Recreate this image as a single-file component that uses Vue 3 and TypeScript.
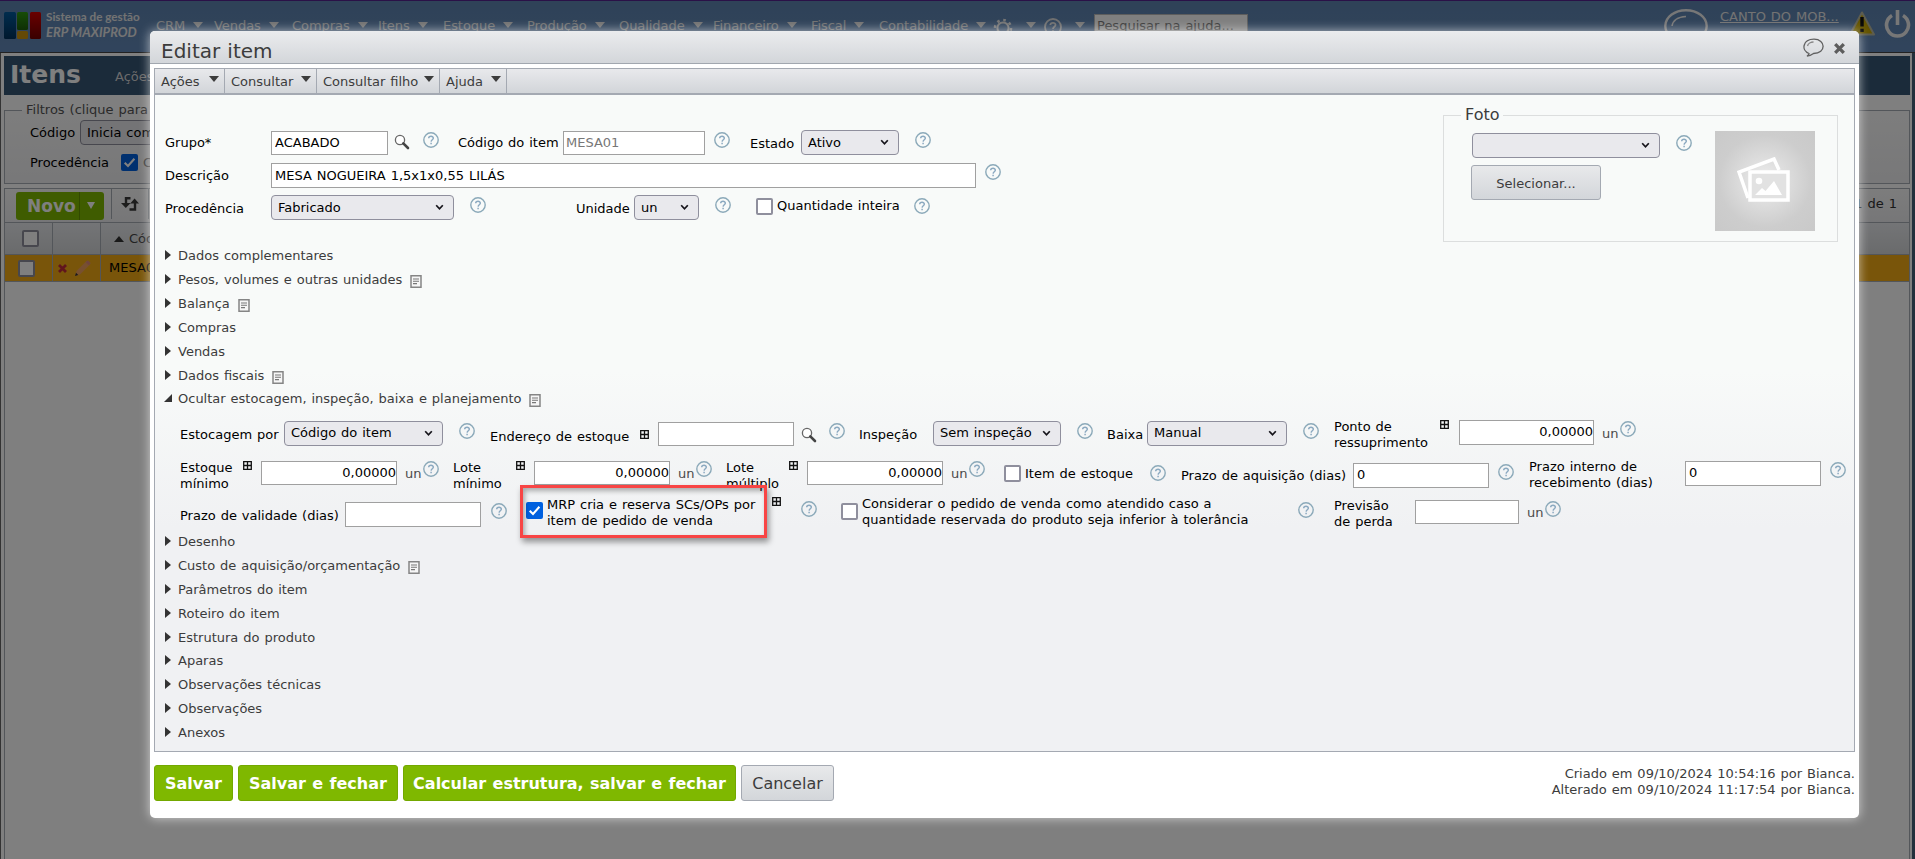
<script setup lang="ts">
import { h, type FunctionalComponent } from 'vue'

const menus: string[] = ['CRM', 'Vendas', 'Compras', 'Itens', 'Estoque', 'Produção', 'Qualidade', 'Financeiro', 'Fiscal', 'Contabilidade']
const dialogMenus: string[] = ['Ações', 'Consultar', 'Consultar filho', 'Ajuda']

interface Section { title: string; note?: boolean; open?: boolean }
const upper: Section[] = [
  { title: 'Dados complementares' },
  { title: 'Pesos, volumes e outras unidades', note: true },
  { title: 'Balança', note: true },
  { title: 'Compras' },
  { title: 'Vendas' },
  { title: 'Dados fiscais', note: true },
  { title: 'Ocultar estocagem, inspeção, baixa e planejamento', note: true, open: true },
]
const lower: Section[] = [
  { title: 'Desenho' },
  { title: 'Custo de aquisição/orçamentação', note: true },
  { title: 'Parâmetros do item' },
  { title: 'Roteiro do item' },
  { title: 'Estrutura do produto' },
  { title: 'Aparas' },
  { title: 'Observações técnicas' },
  { title: 'Observações' },
  { title: 'Anexos' },
]

const Help: FunctionalComponent = () =>
  h('svg', { width: 16, height: 16, viewBox: '0 0 16 16', fill: 'none' }, [
    h('circle', { cx: 8, cy: 8, r: 7.2, stroke: '#8ba9b9', 'stroke-width': 1.4 }),
    h('path', { d: 'M5.7 6.3C5.8 3.6 10.5 3.7 10.3 6.2C10.2 7.8 8.2 7.7 8.1 9.6M8.1 10.8V12.2', stroke: '#8ba9c0', 'stroke-width': 1.5 }),
  ])
const Lens: FunctionalComponent = () =>
  h('svg', { width: 16, height: 16, viewBox: '0 0 16 16', fill: 'none' }, [
    h('circle', { cx: 6, cy: 6, r: 4.6, stroke: '#666', 'stroke-width': 1.3, fill: '#fff' }),
    h('path', { d: 'M9.3 9.3L14 14', stroke: '#444', 'stroke-width': 2.6, 'stroke-linecap': 'round' }),
  ])
const Plus: FunctionalComponent = () =>
  h('svg', { width: 9, height: 9, viewBox: '0 0 9 9', fill: 'none' }, [
    h('path', { d: 'M.7 .7H8.3V8.3H.7ZM4.5 .5V8.5M.5 4.5H8.5', stroke: '#111', 'stroke-width': 1.3 }),
  ])
const Chev: FunctionalComponent = () =>
  h('svg', { width: 9, height: 7, viewBox: '0 0 9 7', fill: 'none' }, [
    h('path', { d: 'M1.2 1.2L4.5 4.8L7.8 1.2', stroke: '#15141a', 'stroke-width': 1.7 }),
  ])
const Check: FunctionalComponent = () =>
  h('svg', { width: 17, height: 17, viewBox: '0 0 17 17', fill: 'none' }, [
    h('rect', { width: 17, height: 17, rx: 2, fill: '#0060df' }),
    h('path', { d: 'M3.7 8.8L7 12L13.4 4.8', stroke: '#fff', 'stroke-width': 2.1 }),
  ])
const Note: FunctionalComponent = () =>
  h('svg', { width: 12, height: 13, viewBox: '0 0 12 13', fill: 'none' }, [
    h('path', { d: 'M1 .8H11V12.2H1Z', stroke: '#858585', 'stroke-width': 1.5, fill: '#f6f6f6' }),
    h('path', { d: 'M3 4H9M3 6.3H9M3 8.6H7', stroke: '#777', 'stroke-width': 1.1 }),
  ])
</script>

<template>
  <div class="screen">
    <header class="topbar">
      <svg class="logo" width="37" height="28" viewBox="0 0 37 28">
        <defs>
          <linearGradient id="lb" x2="0" y2="1"><stop stop-color="#005a9c" /><stop offset="1" stop-color="#00315c" /></linearGradient>
          <linearGradient id="lg" x2="0" y2="1"><stop stop-color="#2f9a10" /><stop offset="1" stop-color="#1e5f0a" /></linearGradient>
          <linearGradient id="lr" x2="0" y2="1"><stop stop-color="#d40000" /><stop offset="1" stop-color="#720000" /></linearGradient>
        </defs>
        <rect x="0" y="0" width="12" height="27" rx="1.5" fill="url(#lb)" />
        <rect x="13" y="0" width="11" height="18" rx="1.5" fill="url(#lg)" />
        <rect x="13" y="19" width="11" height="8" rx="1.5" fill="#c9930c" />
        <rect x="26" y="0" width="11" height="27" rx="1.5" fill="url(#lr)" />
      </svg>
      <div class="brand"><span>Sistema de gestão</span><em>ERP MAXIPROD</em></div>
      <nav class="mainnav">
        <span v-for="m in menus" :key="m"><b>{{ m }}</b><i class="tri"></i></span>
        <span><svg width="20" height="20" viewBox="0 0 20 20" fill="none" stroke="#e8e8e8"><circle cx="10" cy="10" r="5.6" stroke-width="2" /><circle cx="10" cy="10" r="8" stroke-width="2.6" stroke-dasharray="2.6 3.68" /></svg><i class="tri"></i></span>
        <span><svg width="18" height="18" viewBox="0 0 18 18" fill="none" stroke="#dedede" stroke-width="1.8"><circle cx="9" cy="9" r="8" /><path d="M6.3 7C6.5 4 11.7 4.2 11.5 7C11.4 8.8 9 8.8 9 11M9 12.3V14" /></svg><i class="tri"></i></span>
      </nav>
      <div class="search">Pesquisar na ajuda...</div>
      <svg class="bubble" width="44" height="36" viewBox="0 0 44 36" fill="none" stroke="#eee"><ellipse cx="22" cy="17" rx="20.7" ry="15.8" stroke-width="2.4" /><path d="M8 17C9 11 14 8 22 7.5" stroke-width="1.5" /></svg>
      <a class="account">CANTO DO MOB...</a>
      <svg class="warn" width="27" height="25" viewBox="0 0 27 25"><path d="M13 1.5L25 23.5H1Z" fill="#c8a800" stroke="#b9b9a0" stroke-width="2" stroke-linejoin="round" /><path d="M13 6V15.5M13 17.8V21" stroke="#111" stroke-width="3.4" /></svg>
      <svg class="power" width="27" height="29" viewBox="0 0 27 29" fill="none" stroke="#eee" stroke-width="3.6"><path d="M8 5.5A11 11 0 1 0 19 5.5M13.5 0V15" /></svg>
    </header>

    <main class="page">
      <div class="titlebar"><h1>Itens</h1><span>Ações</span></div>
      <fieldset class="filters">
        <legend>Filtros (clique para exibir)</legend>
        <div class="frow"><span>Código</span><span class="fsel">Inicia com</span></div>
        <div class="frow two"><span>Procedência</span><Check /><small>Comprado</small></div>
      </fieldset>
      <section class="list">
        <div class="tools">
          <div class="novo"><b>Novo</b><i></i></div>
          <div class="refresh">
            <svg width="18" height="16" viewBox="0 0 18 16" fill="none" stroke="#3a3a3a" stroke-width="2.4"><path d="M9.500 2.200H5V9M8.500 13.500H14V6" /><path d="M0 7H9.600L4.800 12ZM9.200 7.500H18L13.600 2.500Z" fill="#3a3a3a" stroke="none" /></svg>
          </div>
          <span class="count">1 - 1 de 1</span>
        </div>
        <div class="line head"><span class="c1"><i class="cb"></i></span><span class="c2"></span><span class="c3"><i class="up"></i>Código</span></div>
        <div class="line rec">
          <span class="c1"><i class="cb"></i></span>
          <span class="c2">
            <svg width="9" height="9" viewBox="0 0 9 9"><path d="M1 1L8 8M8 1L1 8" stroke="#c02a3a" stroke-width="2.8" /></svg>
            <svg width="17" height="17" viewBox="0 0 17 17"><path d="M1 16L2.500 11L12 1.500L14 .5L16.500 3L15.500 5L6 14.500Z" fill="#f0a060" /><path d="M1 16L2 12.800L4.300 15Z" fill="#333" /><path d="M11.500 2L14 .5L16.500 3L15 5.500Z" fill="#e08a7c" /></svg>
          </span>
          <span class="c3">MESA01</span>
        </div>
      </section>
    </main>

    <div class="overlay"></div>

    <div class="dialog">
      <div class="dhead">
        <h2>Editar item</h2>
        <svg class="talk" width="22" height="20" viewBox="0 0 22 20" fill="none" stroke="#606060" stroke-width="1.3"><path d="M6 15.500C-2 12.500-.5 1.200 11 1.200C23 1.200 23.500 15.300 10.500 15.500C8.500 17 6 18 4 18C5.500 17.200 6 16.500 6 15.500Z" /><path d="M4.500 8C5 5.500 8 4 10.500 4" stroke="#888" /></svg>
        <svg class="close" width="11" height="11" viewBox="0 0 11 11"><path d="M1.200 1.200L9.800 9.800M9.800 1.200L1.200 9.800" stroke="#5d5d5d" stroke-width="3.300" /></svg>
      </div>

      <div class="panel">
        <nav class="dmenu"><span v-for="m in dialogMenus" :key="m"><b>{{ m }}</b><i class="tri"></i></span></nav>

        <div class="form">
          <div class="intro">
            <div class="fields">
              <div class="row r1">
                <label class="t5">Grupo*</label><input class="w117 t1" value="ACABADO" />
                <Lens class="t4" /><Help class="t2" />
                <label class="t5">Código do item</label><input class="w142 t1 dim" value="MESA01" />
                <Help class="t2" /><label class="t6">Estado</label>
                <div class="sel w98">Ativo<Chev /></div><Help class="t2" />
              </div>
              <div class="row r2">
                <label class="t5">Descrição</label><input class="w705" value="MESA NOGUEIRA 1,5x1x0,55 LILÁS" /><Help class="t1" />
              </div>
              <div class="row r3">
                <label class="t6">Procedência</label><div class="sel w183">Fabricado<Chev /></div><Help class="t2" />
                <label class="t6">Unidade</label><div class="sel w65">un<Chev /></div><Help class="t2" />
                <i class="cb t3"></i><label class="t3">Quantidade inteira</label><Help class="t3" />
              </div>
            </div>
            <fieldset class="photo">
              <legend>Foto</legend>
              <div class="pick">
                <div class="pickline"><div class="sel w188"><Chev /></div><Help class="t2" /></div>
                <div class="btn grey choose">Selecionar...</div>
              </div>
              <div class="thumb">
                <svg width="54" height="46" viewBox="0 0 54 46" fill="none" stroke="#fff"><path d="M11 41L2 15L37 2L42 13" stroke-width="3.500" /><rect x="13" y="15" width="38" height="28" stroke-width="3.500" fill="#e2e2e2" /><circle cx="22" cy="24" r="3.300" fill="#fff" stroke="none" /><path d="M18 38L25 31L28.500 34L37 24L45 38Z" fill="#fff" stroke="none" /></svg>
              </div>
            </fieldset>
          </div>

          <ul class="tree">
            <li v-for="s in upper" :key="s.title"><i :class="s.open ? 'opened' : 'closed'"></i><span>{{ s.title }}</span><Note v-if="s.note" /></li>
          </ul>

          <div class="stock">
            <div class="row ra">
              <label class="t7">Estocagem por</label><div class="sel w159 t1">Código do item<Chev /></div><Help class="t3" />
              <label class="t9">Endereço de estoque</label><Plus class="t10" /><input class="w136 t2 low" /><Lens class="t7" /><Help class="t3" />
              <label class="t7">Inspeção</label><div class="sel w128 t1">Sem inspeção<Chev /></div><Help class="t3" />
              <label class="t7">Baixa</label><div class="sel w140 t1">Manual<Chev /></div><Help class="t3" />
              <label class="tm">Ponto de<br />ressuprimento</label><Plus /><input class="w135 num" value="0,00000" />
              <label class="unit t6">un</label><Help class="t1" />
            </div>
            <div class="row rb">
              <label class="tm">Estoque<br />mínimo</label><Plus /><input class="w136 low num" value="0,00000" /><label class="unit t5">un</label><Help />
              <label class="tm">Lote<br />mínimo</label><Plus /><input class="w136 low num" value="0,00000" /><label class="unit t5">un</label><Help />
              <label class="tm">Lote<br />múltiplo</label><Plus /><input class="w136 low num" value="0,00000" /><label class="unit t5">un</label><Help />
              <i class="cb t4"></i><label class="t5">Item de estoque</label><Help class="t4" />
              <label class="t7">Prazo de aquisição (dias)</label><input class="w136 t2" value="0" /><Help class="t3" />
              <label class="tm2">Prazo interno de<br />recebimento (dias)</label><input class="w136" value="0" /><Help class="t1" />
            </div>
            <div class="row rc">
              <label class="t8">Prazo de validade (dias)</label><input class="w136 t2" /><Help class="t3" />
              <Check class="t2" /><label class="tm3">MRP cria e reserva SCs/OPs por<br />item de pedido de venda</label><Plus class="tm3" /><Help class="t1" />
              <i class="cb t3"></i><label class="tm4">Considerar o pedido de venda como atendido caso a<br />quantidade reservada do produto seja inferior à tolerância</label><Help class="t2" />
              <label class="tm2">Previsão<br />de perda</label><input class="w104 low" /><label class="unit t5">un</label><Help class="t1" />
              <div class="mark"></div>
            </div>
          </div>

          <ul class="tree">
            <li v-for="s in lower" :key="s.title"><i class="closed"></i><span>{{ s.title }}</span><Note v-if="s.note" /></li>
          </ul>
        </div>
      </div>

      <footer class="dfoot">
        <div class="btn green b1">Salvar</div>
        <div class="btn green b2">Salvar e fechar</div>
        <div class="btn green b3">Calcular estrutura, salvar e fechar</div>
        <div class="btn grey b4">Cancelar</div>
        <p>Criado em 09/10/2024 10:54:16 por Bianca.<br />Alterado em 09/10/2024 11:17:54 por Bianca.</p>
      </footer>
    </div>
  </div>
</template>

<style>
html, body { margin: 0; overflow: hidden; }
</style>

<style scoped>
* { box-sizing: border-box; }
.screen { position: relative; width: 1915px; height: 859px; overflow: hidden; background: #fff; font: 13px/16px Verdana, "DejaVu Sans", sans-serif; word-spacing: .8px; color: #000; display: flex; flex-direction: column; }
svg { display: block; flex: none; }
b { font-weight: 400; }

.topbar { height: 53px; flex: none; display: flex; align-items: flex-start; padding: 0 0 0 4px; border-top: 1px solid #54238e; background: linear-gradient(#5e84b0, #6389b9); color: #fff; border-bottom: 1px solid #444; }
.logo { margin-top: 11px; }
.brand { width: 116px; margin: 7px 0 0 5px; font: 700 11.7px/16px Lato, sans-serif; word-spacing: 0; display: flex; flex-direction: column; color: #e6e6e6; white-space: nowrap; }
.brand em { font-size: 13px; }
.mainnav { display: grid; grid-template-columns: 58px 78px 86px 65px 84px 92px 94px 98px 68px 114px 51px 49px; height: 40px; padding-top: 17px; margin-left: -6px; color: #e2e2e2; }
.mainnav span { display: flex; align-items: flex-start; letter-spacing: -.06px; }
.mainnav svg { margin-top: 0; }
.tri { border: 5px solid transparent; border-top: 6px solid currentColor; border-bottom: 0; margin: 4px 0 0 8px; }
.mainnav svg + .tri { margin-left: 13px; }
.search { width: 154px; height: 24px; margin: 13px 0 0 1px; padding: 3px 2px; background: #fff; color: #777; border: 1px solid #bbb; white-space: nowrap; }
.bubble { margin: 8px 12px 0 auto; }
.account { margin-top: 8px; width: 129px; text-decoration: underline; color: #e6e6e6; white-space: nowrap; }
.warn { margin-top: 10px; }
.power { margin: 9px 4px 0 8px; }

.page { flex: 1; border-left: 1px solid #666; border-right: 3px solid #476178; padding: 3px 2px 0 3px; background: #fff; }
.titlebar { height: 39px; background: #365675; color: #fff; display: flex; align-items: center; }
.titlebar h1 { margin: 0 0 2px 6px; width: 105px; font-size: 25px; line-height: 30px; }
.titlebar span { color: #d5d5d5; margin-top: 2px; }
.filters { margin: 7px 0 0; padding: 0 0 0 25px; border: 1px solid #a6acb5; height: 82px; background: linear-gradient(#fbfbfb, #f0f0f2); min-width: 0; }
.filters legend { color: #555; margin-left: -8px; padding: 0 4px; height: 16px; }
.frow { display: flex; align-items: center; height: 25px; margin-top: 2px; }
.frow > span:first-child { width: 50px; }
.frow.two { margin-top: 5px; }
.frow.two > span:first-child { width: 91px; }
.frow small { font-size: 13px; color: #777; margin-left: 5px; }
.fsel { height: 25px; width: 120px; border: 1px solid #8f8f9d; border-radius: 4px; background: #e9e9ed; padding: 4px 6px; }
.list { margin-top: 4px; border: 1px solid #a6acb5; border-bottom: 0; height: 680px; }
.tools { height: 33px; display: flex; align-items: center; background: linear-gradient(#fafafa, #ededf0); }
.novo { margin-left: 11px; width: 88px; height: 28px; background: #7fb800; border-radius: 3px; display: flex; align-items: center; color: #fff; }
.novo b { width: 64px; height: 28px; line-height: 29px; padding-left: 11px; font-weight: 700; font-size: 17px; border-right: 1px solid #659300; }
.novo i { border: 4px solid transparent; border-top: 7px solid #fff; border-bottom: 0; margin-left: 7px; }
.refresh { height: 30px; margin: -3px 0 0 7px; width: 38px; border: solid #a6acb5; border-width: 0 1px; display: flex; align-items: center; justify-content: center; }
.count { margin: -3px 12px 0 auto; color: #333; }
.line { display: flex; height: 32px; border-top: 1px solid #a6acb5; }
.line.head { background: linear-gradient(#e8eaee, #d4d6d8); color: #444; }
.line.rec { height: 28px; background: #f2ab14; border-bottom: 1px solid #a6acb5; }
.line span { display: flex; align-items: center; border-right: 1px solid #a6acb5; }
.line .c1 { width: 48px; padding-left: 17px; }
.rec .c1 { padding-left: 13px !important; }
.line .c2 { width: 48px; padding-left: 5px; gap: 7px; }
.line .c3 { border: 0; padding-left: 8px; }
.head .c3 { padding-left: 13px; }
.up { border: 5px solid transparent; border-bottom: 6px solid #333; border-top: 0; margin-right: 5px; }
.cb { display: block; width: 17px; height: 17px; flex: none; background: #fff; border: 2px solid #8f8f9d; border-radius: 2px; }

.overlay { position: absolute; inset: 0; background: rgba(0, 0, 0, .5); }

.dialog { position: absolute; left: 150px; top: 31px; width: 1709px; height: 787px; border-radius: 5px; background: #fff; box-shadow: 0 0 11px rgba(255, 255, 255, .65); color: #000; display: flex; flex-direction: column; }
.dhead { height: 33px; flex: none; border-bottom: 1px solid #a1a7af; border-radius: 5px 5px 0 0; background: linear-gradient(#ebecee, #d3d6da); display: flex; align-items: center; }
.dhead h2 { margin: 8px auto 0 11px; font-weight: 400; font-size: 20px; line-height: 24px; color: #3c3c3c; }
.talk { margin: 2px 9px 0 0; }
.close { margin: 3px 14px 0 0; }
.panel { margin: 4px 4px 0; height: 684px; flex: none; border: 1px solid #a4a9b2; display: flex; flex-direction: column; }
.dmenu { height: 26px; flex: none; display: grid; grid-template-columns: 70px 92px 123px 67px; background: linear-gradient(#e8e9ec, #d2d5d9); border-bottom: 2px solid #a4a9b2; color: #3c3c3c; }
.dmenu span { border-right: 1px solid #a4a9b2; display: flex; padding: 5px 6px 0 6px; white-space: nowrap; justify-content: space-between; }
.dmenu .tri { margin: 2px -1px 0 0; }
.form { flex: 1; background: linear-gradient(#f8faf9 0, #f8faf9 42%, #f0f1f3 66%, #f0f1f3); }

.intro { height: 149px; display: flex; }
.fields { width: 1288px; padding: 35px 0 0 10px; }
.row { display: grid; align-items: start; justify-content: start; }
.row > * { justify-self: start; }
.r1 { height: 33px; grid-template-columns: 106px 123px 29px 35px 105px 151px 36px 51px 114px 16px; }
.r2 { height: 32px; grid-template-columns: 106px 714px 16px; }
.r3 { grid-template-columns: 106px 199px 106px 58px 81px 41px 21px 137px 16px; }
label { white-space: nowrap; line-height: 16px; }
input { height: 25px; margin: 0; padding: 0 3px 1px; border: 1px solid #a0a0a0; border-radius: 0; background: #fff; font: inherit; word-spacing: inherit; color: #000; outline: 0; }
input.low, .r1 input { height: 24px; }
input.dim { color: #777; padding-left: 2px; }
input.num { text-align: right; padding-right: 0; }
.sel { height: 25px; flex: none; border: 1px solid #8f8f9d; border-radius: 4px; background: #e9e9ed; padding: 0 9px 0 6px; display: flex; align-items: center; justify-content: space-between; white-space: nowrap; }
.sel svg { margin-left: auto; }
.unit { color: #4a4a4a; }
.w65 { width: 65px; } .w98 { width: 98px; } .w104 { width: 104px; } .w117 { width: 117px; } .w128 { width: 128px; }
.w135 { width: 135px; } .w136 { width: 136px; } .w140 { width: 140px; } .w142 { width: 142px; } .w159 { width: 159px; }
.w183 { width: 183px; } .w188 { width: 188px; } .w705 { width: 705px; }
.t1 { margin-top: 1px; } .t2 { margin-top: 2px; } .t3 { margin-top: 3px; } .t4 { margin-top: 4px; } .t5 { margin-top: 5px; } .t6 { margin-top: 6px; }
.t7 { margin-top: 7px; } .t8 { margin-top: 8px; } .t9 { margin-top: 9px; } .t10 { margin-top: 10px; }
.tm { margin-top: -1px; } .tm2 { margin-top: -2px; } .tm3 { margin-top: -3px; } .tm4 { margin-top: -4px; }

.photo { margin: 10px 0 0; padding: 0; width: 395px; height: 137px; border: 1px solid #dcdede; display: flex; min-width: 0; }
.photo legend { margin-left: 17px; padding: 0 4px; font-size: 16px; line-height: 20px; color: #3c3c3c; }
.pick { width: 243px; padding: 8px 0 0 27px; display: flex; flex-direction: column; gap: 7px; }
.pickline { display: flex; gap: 16px; margin-left: 1px; }
.thumb { margin: 6px 0 0 28px; width: 100px; height: 100px; background: radial-gradient(circle at 50% 50%, #efefef 0, #dedede 30%, #cdcdcd 65%, #c9c9c9); display: flex; align-items: center; justify-content: center; }
.thumb svg { margin: -3px 3px 0 0; }

.btn { display: flex; align-items: center; justify-content: center; border-radius: 3px; white-space: nowrap; }
.grey { border: 1px solid #a4a9b2; background: linear-gradient(#e8e9eb, #d3d6da); color: #3c3c3c; }
.green { background: #7fb800; border: 1px solid #73a800; color: #fff; font-weight: 700; }
.choose { width: 130px; height: 35px; padding-top: 3px; }

.tree { list-style: none; margin: 0; padding: 0 0 0 10px; color: #3c3c3c; }
.tree li { height: 23.83px; display: flex; align-items: center; }
.tree li > span { margin-top: 1px; }
.tree li svg { margin: 4px 0 0 8px; }
.closed { border: 5px solid transparent; border-left: 6px solid #333; border-right: 0; margin: -1px 7px 0 0; }
.opened { width: 0; height: 0; border-left: 8px solid transparent; border-bottom: 8px solid #333; margin: -2px 6px 0 -1px; }

.stock { padding: 9px 0 0 25px; height: 119px; }
.ra { height: 41px; grid-template-columns: 104px 175px 31px 150px 18px 143px 28px 30px 74px 144px 30px 40px 156px 31px 106px 19px 143px 18px 16px; }
.rb { height: 39px; grid-template-columns: 63px 18px 144px 18px 30px 63px 18px 144px 18px 30px 63px 18px 144px 18px 35px 21px 125px 31px 172px 145px 31px 156px 145px 16px; }
.rc { position: relative; height: 30px; grid-template-columns: 165px 146px 35px 21px 225px 29px 40px 21px 436px 36px 81px 112px 18px 16px; }
.mark { position: absolute; left: 340px; top: -15px; width: 247px; height: 53px; border: 3px solid #f84545; box-shadow: 2px 4px 6px rgba(0, 0, 0, .4), inset 2px 3px 5px rgba(0, 0, 0, .3); }

.dfoot { display: flex; padding: 13px 4px 0; gap: 5px; }
.dfoot .btn { height: 36px; font-size: 16px; padding-top: 1px; }
.b1 { width: 79px; } .b2 { width: 160px; } .b3 { width: 333px; } .b4 { width: 93px; }
.dfoot p { margin: 1px 0 0 auto; text-align: right; color: #3c3c3c; }
</style>
